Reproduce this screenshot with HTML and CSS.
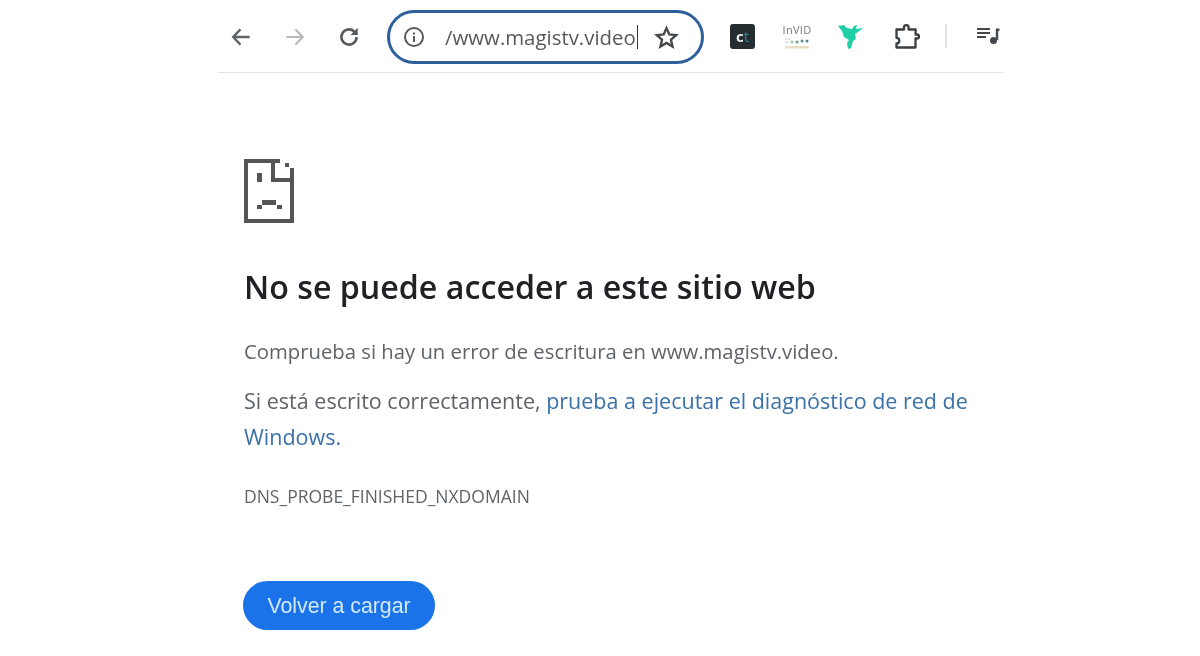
FILE: index.html
```html
<!DOCTYPE html>
<html>
<head>
  <title>www.magistv.video</title>
  <link rel="stylesheet" href="styles.css">
</head>
<body>
  <div class="window">
    <!-- Toolbar -->
    <div class="toolbar">
      <svg class="nav-icon" viewBox="0 0 24 24"><path d="M20 12H5M11.5 5L4.8 12l6.7 7" fill="none" stroke="#5f6368" stroke-width="2.2"/></svg>
      <svg class="nav-icon forward" viewBox="0 0 24 24"><path d="M4 12h15M12.5 5l6.7 7-6.7 7" fill="none" stroke="#b8babd" stroke-width="2"/></svg>
      <svg class="nav-icon reload" viewBox="0 0 24 24"><path d="M19 12a7 7 0 1 1-2.2-5.1" fill="none" stroke="#55585c" stroke-width="2.4"/><path d="M20 3.500v6.600h-6.600z" fill="#55585c"/></svg>

      <div class="omnibox">
        <svg class="info" viewBox="0 0 22 22"><circle cx="11" cy="11" r="9" fill="none" stroke="#55585c" stroke-width="2"/><rect x="10" y="10" width="2" height="6" fill="#55585c"/><rect x="10" y="6.500" width="2" height="2" fill="#55585c"/></svg>
        <span class="url">/www.magistv.video</span>
        <span class="caret"></span>
        <svg class="star" viewBox="0 0 24 24"><path d="M12 3l2.700 6.100 6.600.6-5 4.400 1.500 6.500L12 17.200l-5.800 3.400 1.500-6.500-5-4.400 6.600-.6z" fill="none" stroke="#45484c" stroke-width="2.300"/></svg>
      </div>

      <div class="ext-ct"><span class="ct-c">c</span><span class="ct-t">t</span></div>
      <div class="ext-invid">
        <span class="invid-name">InVID</span>
        <svg viewBox="0 0 26 13" class="invid-art"><rect x="1" y="10" width="24" height="2.500" fill="#eadfc4"/><path d="M1 3h6M1 6h4" stroke="#c9d6d2" stroke-width="1.200"/><circle cx="8" cy="6" r="1.400" fill="#9fc2b5"/><circle cx="13" cy="6" r="1.500" fill="#6f9f90"/><circle cx="18" cy="5" r="1.500" fill="#5f8f88"/><circle cx="23" cy="5" r="1.500" fill="#4d8a80"/></svg>
      </div>
      <svg class="ext-bird" viewBox="0 0 26 26"><path d="M0 3l6-1 3 3 5 1 2-3 3-1-1 4 7-1-5 4-3 2 1 5-3 2-2 7-3 1-1-6 2-3-5-3-2-6z" fill="#1fcfa5"/></svg>
      <svg class="ext-puzzle" viewBox="0 0 26 26"><path d="M2.500 6.500H10V4.500a2.300 2.300 0 0 1 4.600 0v2h7V11.500H23a2 2 0 0 1 0 4h-1.500v9H2.500v-4a2.800 2.800 0 0 0 0-5.600z" fill="none" stroke="#3a3d41" stroke-width="2.300" stroke-linejoin="round"/></svg>
      <div class="divider"></div>
      <svg class="ext-media" viewBox="0 0 24 18"><path d="M1 2h13M1 6h13M1 10h9" stroke="#45484c" stroke-width="2" fill="none"/><path d="M21 2v11" stroke="#45484c" stroke-width="2.400" fill="none"/><path d="M20 1.500h3.500v2.500H20z" fill="#45484c"/><circle cx="17.500" cy="13.500" r="3.500" fill="#45484c"/></svg>
    </div>

    <!-- Error page -->
    <div class="content">
      <svg class="sad-file" viewBox="0 0 50 64" shape-rendering="crispEdges">
        <g fill="#555">
          <rect x="0" y="0" width="36" height="4"/>
          <rect x="0" y="0" width="4" height="64"/>
          <rect x="0" y="60" width="50" height="4"/>
          <rect x="46" y="9" width="4" height="55"/>
          <rect x="27" y="0" width="4" height="23"/>
          <rect x="27" y="19" width="23" height="4"/>
          <rect x="41" y="4" width="4" height="4"/>
          <rect x="13" y="14" width="5" height="9"/>
          <rect x="18" y="41" width="14" height="5"/>
          <rect x="13" y="46" width="5" height="4"/>
          <rect x="33" y="46" width="5" height="4"/>
        </g>
      </svg>

      <h1 class="title">No se puede acceder a este sitio web</h1>
      <p class="line">Comprueba si hay un error de escritura en www.magistv.video.</p>
      <p class="line suggest">Si está escrito correctamente, <a href="#">prueba a ejecutar el diagnóstico de red de</a><br><a href="#">Windows.</a></p>
      <div class="code">DNS_PROBE_FINISHED_NXDOMAIN</div>
      <button class="reload-btn" type="button">Volver a cargar</button>
    </div>
  </div>
</body>
</html>
```

FILE: styles.css
```css
html, body {
  height: 100%;
}

body {
  margin: 0;
  background-color: white;
  font-family: 'Open Sans', sans-serif;
  overflow: hidden;
}

.window {
  width: 786px;
  margin-left: 218px;
  filter: blur(0.4px);
}

/* Toolbar */
.toolbar {
  display: flex;
  align-items: center;
  height: 72px;
  padding: 0 0 0 10px;
  border-bottom: 1px solid #e6e6e6;
}

.nav-icon {
  width: 26px;
  height: 26px;
  margin-top: 2px;
  flex: none;
}

.forward,
.reload {
  margin-left: 28px;
}

.omnibox {
  display: flex;
  align-items: center;
  flex: none;
  width: 311px;
  height: 48px;
  margin-top: 2px;
  margin-left: 25px;
  border: 3px solid #2f5f9b;
  border-radius: 28px;
}

.info {
  width: 22px;
  height: 22px;
  margin-left: 13px;
  flex: none;
}

.url {
  margin-left: 20px;
  font-size: 20.4px;
  color: #55585c;
  white-space: nowrap;
}

.caret {
  width: 1px;
  height: 24px;
  margin-left: 1px;
  background-color: #333;
  flex: none;
}

.star {
  width: 25px;
  height: 25px;
  margin-left: 16px;
  flex: none;
}

.ext-ct {
  display: flex;
  align-items: center;
  justify-content: center;
  flex: none;
  width: 25px;
  height: 25px;
  margin-left: 26px;
  background-color: #262d30;
  border-radius: 3px;
  font-size: 15px;
  font-weight: bold;
  line-height: 1;
}

.ct-c {
  color: #e8eef0;
}

.ct-t {
  color: #2f7f8f;
  font-weight: normal;
}

.ext-invid {
  display: flex;
  flex-direction: column;
  align-items: center;
  flex: none;
  width: 28px;
  margin-left: 28px;
}

.invid-name {
  font-size: 11px;
  line-height: 11px;
  letter-spacing: 0.3px;
  color: #77797c;
}

.invid-art {
  width: 26px;
  height: 13px;
  margin-top: 1px;
}

.ext-bird {
  width: 26px;
  height: 26px;
  margin-left: 27px;
  flex: none;
}

.ext-puzzle {
  width: 26px;
  height: 26px;
  margin-left: 30px;
  flex: none;
}

.divider {
  width: 2px;
  height: 24px;
  margin-left: 25px;
  background-color: #e2e4e6;
  flex: none;
}

.ext-media {
  width: 24px;
  height: 18px;
  margin-left: 29px;
  flex: none;
}

/* Error page */
.content {
  padding: 86px 0 0 26px;
  color: #5f6368;
}

.sad-file {
  display: block;
  width: 50px;
  height: 64px;
}

.title {
  margin: 46px 0 0;
  font-size: 32.2px;
  line-height: 36px;
  font-weight: 600;
  color: #202124;
}

.line {
  margin: 0;
  font-size: 20.3px;
  line-height: 36px;
}

.title + .line {
  margin-top: 28px;
}

.suggest {
  margin-top: 14px;
  font-size: 21.5px;
}

.suggest a {
  color: #3a71a8;
  text-decoration: none;
}

.code {
  margin-top: 29px;
  font-size: 17.5px;
  line-height: 24px;
}

.reload-btn {
  display: block;
  width: 192px;
  height: 49px;
  margin-top: 73px;
  margin-left: -1px;
  padding: 2px 0 0;
  border: none;
  border-radius: 25px;
  background-color: #1a73e8;
  color: #d6e9fb;
  font-family: 'Liberation Sans', sans-serif;
  font-size: 21.3px;
  cursor: pointer;
}
```
